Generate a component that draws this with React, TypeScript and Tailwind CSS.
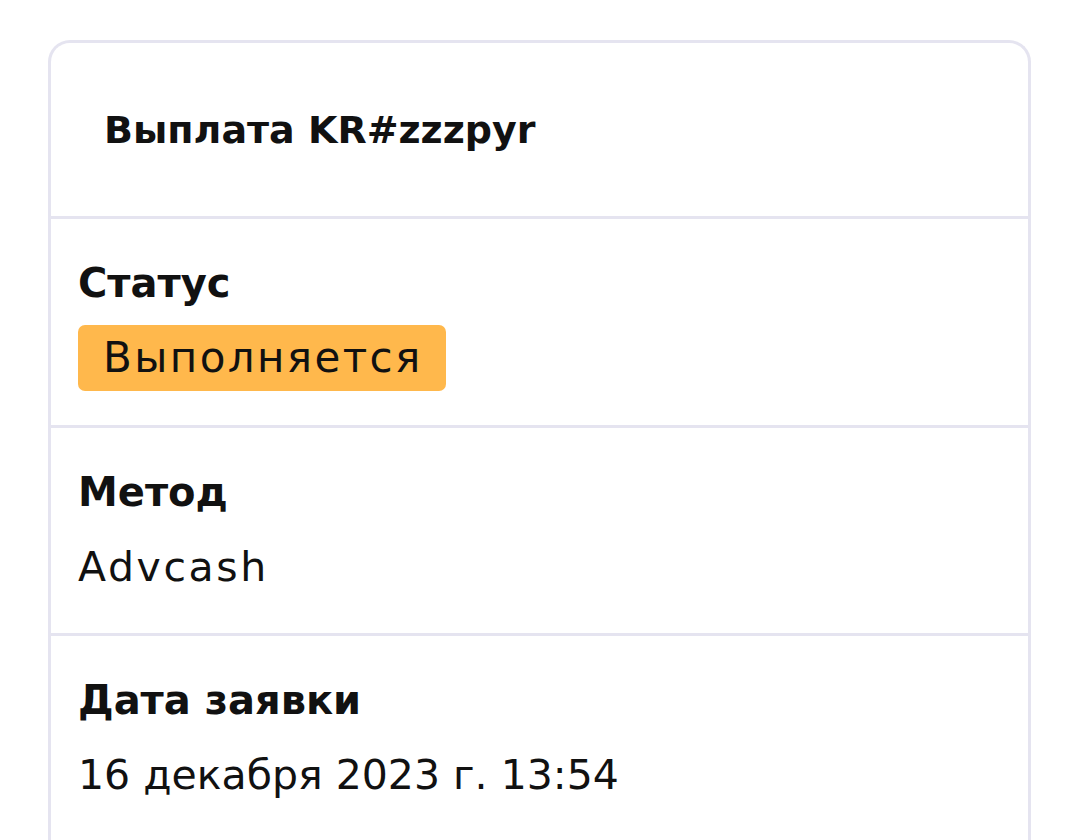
export default function App() {
  return (
    <div
      className="w-[1080px] h-[840px] overflow-hidden bg-white text-[#111111]"
      style={{ fontFamily: '"DejaVu Sans", sans-serif' }}
    >
      <div className="ml-[48px] mt-[40px] w-[983px] rounded-t-[22px] border-[3px] border-b-0 border-[#e5e4f0]">
        <div className="flex h-[173px] items-center pl-[53px]">
          <h1 className="text-[38px] font-bold leading-none">Выплата KR#zzzpyr</h1>
        </div>

        <div className="flex h-[209px] flex-col border-t-[3px] border-[#e5e4f0] pl-[27px] pt-[40px]">
          <div className="text-[40px] font-bold leading-[48px]">Статус</div>
          <div className="mt-[18px] self-start rounded-[7px] bg-[#ffb84c] pl-[25px] pr-[23px] text-[42px] font-normal leading-[66px] tracking-[2.4px]">
            Выполняется
          </div>
        </div>

        <div className="flex h-[208px] flex-col border-t-[3px] border-[#e5e4f0] pl-[27px] pt-[40px]">
          <div className="text-[40px] font-bold leading-[48px]">Метод</div>
          <div className="mt-[27px] text-[41px] font-normal leading-[48px] tracking-[2.6px]">Advcash</div>
        </div>

        <div className="flex h-[208px] flex-col border-t-[3px] border-[#e5e4f0] pl-[27px] pt-[40px]">
          <div className="text-[40px] font-bold leading-[48px]">Дата заявки</div>
          <div className="mt-[27px] text-[41px] font-normal leading-[48px]">16 декабря 2023 г. 13:54</div>
        </div>
      </div>
    </div>
  );
}
